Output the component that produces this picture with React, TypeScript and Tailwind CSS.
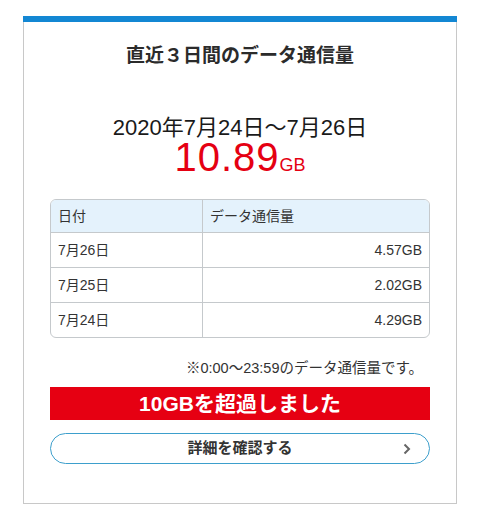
import React from 'react';

const rows = [
  { date: '7月26日', amount: '4.57GB' },
  { date: '7月25日', amount: '2.02GB' },
  { date: '7月24日', amount: '4.29GB' },
];

const App: React.FC = () => {
  return (
    <div className="min-h-screen bg-white pt-4 px-[23px] font-['Liberation_Sans','Noto_Sans_CJK_JP',sans-serif] text-[#333]">
      <div className="border-x border-b border-[#c8c8c8] w-[434px]">
        <div className="h-[6px] bg-[#1387d3] -mx-px" />

        <div className="px-[26px] pt-[20px] pb-[39px] flex flex-col">
          <h2 className="text-center text-[19px] leading-[28px] font-bold text-[#2b2b2b]">
            直近３日間のデータ通信量
          </h2>

          <div className="mt-[47px] text-center text-[22px] leading-[22px] text-[#1a1a1a]">
            2020年7月24日〜7月26日
          </div>
          <div className="text-center text-[#e50012] leading-[36px] h-[36px]">
            <span className="inline-block text-[40px] leading-[36px] tracking-[1px]">10.89</span>
            <span className="inline-block text-[18px] leading-[20px]">GB</span>
          </div>

          <div className="mt-[24px] border border-[#c5c9cc] rounded-md overflow-hidden text-[14px]">
            <div className="grid grid-cols-[152px_1fr] bg-[#e4f2fc] h-[32px]">
              <div className="flex items-center pl-[7px] border-r border-[#c5c9cc]">日付</div>
              <div className="flex items-center pl-[7px]">データ通信量</div>
            </div>
            {rows.map(r => (
              <div key={r.date} className="grid grid-cols-[152px_1fr] h-[35px] border-t border-[#c5c9cc]">
                <div className="flex items-center pl-[7px] border-r border-[#c5c9cc]">{r.date}</div>
                <div className="flex items-center justify-end pr-[7px]">{r.amount}</div>
              </div>
            ))}
          </div>

          <div className="mt-[21px] text-right pr-[7px] text-[14.5px] leading-[18px]">
            ※0:00〜23:59のデータ通信量です。
          </div>

          <div className="mt-[10px] h-[33px] bg-[#e60012] flex items-center justify-center text-white font-bold text-[21px]">
            10GBを超過しました
          </div>

          <button className="mt-[13px] h-[31px] rounded-full border-[1.5px] border-[#3d9fcc] relative flex items-center justify-center font-bold text-[15px] text-[#333]">
            詳細を確認する
            <svg
              className="absolute right-[18px] top-1/2 -translate-y-1/2"
              width="8"
              height="11"
              viewBox="0 0 8 11"
              fill="none"
              stroke="#666"
              strokeWidth="2"
            >
              <path d="M1.5 1 L6 5.5 L1.5 10" />
            </svg>
          </button>
        </div>
      </div>
    </div>
  );
};

export default App;
